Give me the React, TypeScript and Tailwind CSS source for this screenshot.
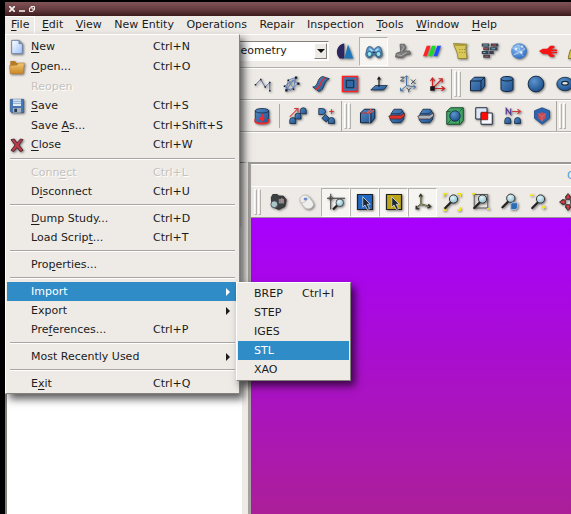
import type { ReactNode } from "react";

const SHADOW = "drop-shadow-[1px_1px_1px_rgba(0,0,0,0.5)]";

function Icon({ children, size = "w-6 h-6" }: { children: ReactNode; size?: string }) {
  return (
    <svg viewBox="0 0 24 24" className={`${size} shrink-0 ${SHADOW}`} fill="none" aria-hidden="true">
      {children}
    </svg>
  );
}

function Gradients() {
  return (
    <defs>
      <linearGradient id="blue" x1="0" y1="0" x2="1" y2="1">
        <stop offset="0" stopColor="#5289c4" />
        <stop offset="1" stopColor="#1f5390" />
      </linearGradient>
      <linearGradient id="page" x1="0" y1="0" x2="1" y2="1">
        <stop offset="0" stopColor="#ffffff" />
        <stop offset="1" stopColor="#9cc2fb" />
      </linearGradient>
      <linearGradient id="folder" x1="0" y1="0" x2="0" y2="1">
        <stop offset="0" stopColor="#f3c878" />
        <stop offset="1" stopColor="#c98722" />
      </linearGradient>
      <radialGradient id="ball" cx="0.38" cy="0.32" r="0.7">
        <stop offset="0" stopColor="#5b95cf" />
        <stop offset="1" stopColor="#1d4f8b" />
      </radialGradient>
      <radialGradient id="globe" cx="0.4" cy="0.35" r="0.7">
        <stop offset="0" stopColor="#8fbdf0" />
        <stop offset="1" stopColor="#2c6cc0" />
      </radialGradient>
      <radialGradient id="lens" cx="0.4" cy="0.35" r="0.7">
        <stop offset="0" stopColor="#e2f6fa" />
        <stop offset="1" stopColor="#8bbccb" />
      </radialGradient>
    </defs>
  );
}

const Lens = ({ x = 0, y = 0 }: { x?: number; y?: number }) => (
  <g transform={`translate(${x} ${y})`}>
    <path d="M3 20L11 12" stroke="#222" strokeWidth="3" strokeLinecap="round" />
    <circle cx="14" cy="8" r="5.5" fill="url(#lens)" stroke="#333" strokeWidth="1.3" />
  </g>
);

const Stone = ({ x, y }: { x: number; y: number }) => (
  <path d={`M${x} ${y + 8}v-4a4 4 0 0 1 8 0v4z`} fill="url(#blue)" stroke="#10253d" />
);

const Cube = () => (
  <>
    <path d="M2 8l5-5h14v12l-5 6H2z" fill="url(#blue)" stroke="#10253d" strokeWidth="1.3" />
    <path d="M2 8h14l5-5M16 8v13" stroke="#10253d" strokeWidth="1.3" />
  </>
);

const Slice = ({ color }: { color: string }) => (
  <>
    <path d="M4 9l4-6h10l3 5v8l-4 5H6l-3-4z" fill="url(#blue)" stroke="#10253d" />
    <path d="M4 9h12l4-4" stroke="#10253d" />
    <path d="M1 12l4-1h12l5-3v4l-5 4H3z" fill={color} stroke="#35201f" strokeWidth="0.8" />
  </>
);

const Cursor = ({ color }: { color: string }) => (
  <>
    <path d="M2 2h20v20H2z" fill={color} stroke="#222" strokeWidth="1.6" />
    <path d="M9 5v14l3-3 3 6 3-1-3-6h4z" fill="#1d2837" stroke="#e3e3e3" strokeWidth="1" />
  </>
);

type Tool = { label: string; art: ReactNode; on?: boolean };

const moduleTools: Tool[] = [
  {
    label: "Application",
    art: (
      <>
        <path d="M11 2v20H5C-2 16 1 3 11 2z" fill="#2b2560" />
        <path d="M16 3l7 19H11z" fill="#1f76b8" />
      </>
    ),
  },
  {
    label: "Geometry",
    on: true,
    art: (
      <>
        <path d="M3 8c3-4 6-1 9 2 3-3 6-6 9-2l2 8c0 6-8 7-9 1h-4c-1 6-9 5-9-1z" fill="#5a9ad2" stroke="#2c4a66" />
        <circle cx="6" cy="16" r="3.3" fill="#8ee5f4" stroke="#23415c" />
        <circle cx="18" cy="16" r="3.3" fill="#8ee5f4" stroke="#23415c" />
        <path d="M6 9l4 3M18 9l-4 3" stroke="#b6e2f6" strokeWidth="2" />
        <path d="M10 14h4" stroke="#234" strokeWidth="2" />
      </>
    ),
  },
  {
    label: "Study",
    art: (
      <>
        <path d="M8 3h6l2 5-4 4h9l1 4-6 1-5 4-9-1 1-5 6-2z" fill="#7c7c7c" stroke="#5c5c5c" />
        <path d="M10 4l3 3-3 5M4 17l6 1 7-4" stroke="#bdbdbd" />
      </>
    ),
  },
  {
    label: "Colors",
    art: (
      <>
        <path d="M5 5h5L5 19H0z" fill="#ff2525" />
        <path d="M12 5h5l-5 14H7z" fill="#18dd22" />
        <path d="M19 5h5l-5 14h-5z" fill="#1750ff" />
      </>
    ),
  },
  {
    label: "Notebook",
    art: (
      <>
        <path d="M2 2l18 1c-3 4-1 9 0 19H8C8 14 4 9 2 2z" fill="#d8c85a" stroke="#887820" />
        <path d="M4 4h14M10 10h1M13 10h1M16 10h1M10 14h1M13 14h1M16 14h1" stroke="#887820" strokeWidth="1.3" />
      </>
    ),
  },
  {
    label: "Wall",
    art: (
      <>
        <path d="M1 2h10v4H1zM13 2h10v4H13zM3 7h8v4H3zM12 7h10v4H12zM1 12h9v4H1zM11 12h6v4h-6zM3 17h9v4H3z" fill="#374050" />
        <path d="M3 4h6M14 9h5M3 14h3" stroke="#72b4cc" strokeWidth="1.4" />
        <path d="M4 9h5M15 4h5M5 19h5" stroke="#c94c50" strokeWidth="1.4" />
      </>
    ),
  },
  {
    label: "Network",
    art: (
      <>
        <circle cx="12" cy="12" r="10.5" fill="url(#globe)" />
        <path d="M3 8l8-4 9 5-6 5-9 3M11 4l3 10 4 5M3 8l11 6M20 9l-15 8" stroke="#cfe2f7" strokeWidth="0.7" />
        <circle cx="8" cy="9" r="1.8" fill="#e4f1fc" />
        <circle cx="15" cy="14" r="1.6" fill="#e4f1fc" />
        <circle cx="16" cy="6" r="1.3" fill="#e4f1fc" />
      </>
    ),
  },
  {
    label: "Fish",
    art: (
      <path d="M0 12l5-3h6l4-4h5l1 2-5 3h8v2h-8v1h8v2h-8l5 3-1 2h-5l-4-4H5z" fill="#f61515" />
    ),
  },
  {
    label: "Help",
    art: (
      <>
        <path d="M3 11L9 2h13v9z" fill="#3d3d35" />
        <path d="M0 22l3-11h19v11z" fill="#d6c532" stroke="#6d6420" />
      </>
    ),
  },
];

const basicTools: Tool[] = [
  {
    label: "Curve",
    art: (
      <>
        <path d="M2 13L9 6l6 10 6-6v11" stroke="#56699a" strokeWidth="1.3" />
        <path d="M1 12h2v2H1zM8 5h2v2H8zM14 15h2v2h-2zM20 9h2v2h-2zM20 20h2v2h-2z" fill="#172332" />
      </>
    ),
  },
  {
    label: "Wire",
    art: (
      <>
        <path d="M4 20L7 7l10-4-3 15zM2 15l11-8 7 4-10 10zM7 7l7 11M4 20l13-17" stroke="#5577b4" strokeWidth="1.1" />
        <path d="M3 19h3v3H3zM6 6h2v2H6zM16 2h3v3h-3zM19 10h3v3h-3zM13 18h2v2h-2zM1 14h2v2H1z" fill="#101827" />
      </>
    ),
  },
  {
    label: "Surface",
    art: (
      <>
        <path d="M1 16c8 0 5-12 13-14l9 3c-8 3-6 15-14 17z" fill="url(#blue)" stroke="#10253d" />
        <path d="M5 19c8-2 5-13 13-15" stroke="#dd3131" strokeWidth="2" />
      </>
    ),
  },
  {
    label: "Inner face",
    art: (
      <>
        <path d="M2 2h20v20H2z" fill="#3a73ad" stroke="#ff2424" strokeWidth="2" />
        <path d="M3 3l5 5M21 3l-5 5M3 21l5-5M21 21l-5-5" stroke="#d93a4b" />
        <path d="M7 7h10v10H7z" fill="#3068a3" stroke="#12243d" strokeWidth="1.3" />
      </>
    ),
  },
  {
    label: "Plane",
    art: (
      <>
        <path d="M7 14h16l-5 6H1z" fill="url(#blue)" stroke="#10253d" />
        <path d="M12 16V4M10 6l2-3 2 3" stroke="#171717" strokeWidth="1.5" />
      </>
    ),
  },
  {
    label: "Local axes",
    art: (
      <>
        <path d="M10 1v13l12 2M10 14l-8 7M8 3l2-2 2 2M19 13l3 3-3 3M2 17v4h4" stroke="#44719f" strokeWidth="1.3" />
        <path d="M2 3h5L2 8h5M16 6l6 6M22 6l-6 6M10 17l3 3 3-3M13 20v3" stroke="#404957" strokeWidth="1.3" />
      </>
    ),
  },
  {
    label: "Origin",
    art: (
      <>
        <path d="M6 18V4M6 18h16M6 18L18 6M3 8l3-4 3 4M18 15l4 3-4 3M14 5h5v5" stroke="#cd2525" strokeWidth="1.6" />
        <path d="M3 15h6v6H3z" fill="#151515" />
      </>
    ),
  },
];

const primitives: Tool[] = [
  { label: "Box", art: <Cube /> },
  {
    label: "Cylinder",
    art: (
      <>
        <path d="M4 5c0-4 16-4 16 0v14c0 4-16 4-16 0z" fill="url(#blue)" stroke="#10253d" strokeWidth="1.3" />
        <path d="M4 5c0 4 16 4 16 0" stroke="#10253d" strokeWidth="1.3" />
      </>
    ),
  },
  { label: "Sphere", art: <circle cx="12" cy="12" r="10.5" fill="url(#ball)" stroke="#10253d" strokeWidth="1.2" /> },
  {
    label: "Torus",
    art: (
      <>
        <ellipse cx="12" cy="12" rx="11" ry="9" fill="url(#ball)" stroke="#10253d" />
        <ellipse cx="12" cy="11" rx="4.500" ry="2.500" fill="#e8e5df" stroke="#10253d" strokeWidth="1.6" />
      </>
    ),
  },
];

const revolve: Tool[] = [
  {
    label: "Extrude cut",
    art: (
      <>
        <path d="M3 5c0-4 18-4 18 0v14c0 4-18 4-18 0z" fill="url(#blue)" stroke="#10253d" />
        <path d="M3 5c0 4 18 4 18 0" stroke="#10253d" />
        <path d="M12 9v8M9 14l3 4 3-4" stroke="#ff2424" strokeWidth="2.2" />
        <path d="M3 16v3c0 4 18 4 18 0v-3" stroke="#f02b2b" strokeWidth="2.4" />
      </>
    ),
  },
];

const transforms: Tool[] = [
  {
    label: "Translate",
    art: (
      <>
        <Stone x={1} y={14} />
        <Stone x={8} y={8} />
        <Stone x={15} y={1} />
        <path d="M1 13L11 3M7 2h5v5" stroke="#dd3030" strokeWidth="1.4" />
      </>
    ),
  },
  {
    label: "Mirror",
    art: (
      <>
        <path d="M1 2h5a4 4 0 0 1 0 8H1zM5 15l5-5 5 5-4 5z" fill="url(#blue)" stroke="#10253d" />
        <Stone x={14} y={14} />
        <path d="M18 3v6M15 6h6" stroke="#dd3030" strokeWidth="1.6" />
      </>
    ),
  },
];

const operations: Tool[] = [
  {
    label: "Fuse",
    art: (
      <>
        <Cube />
        <path d="M3 8h12l5-4M11 8l5-5M14 9v12" stroke="#ef5b55" strokeWidth="1.5" />
      </>
    ),
  },
  { label: "Section", art: <Slice color="#df3030" /> },
  { label: "Partition", art: <Slice color="#aeb4bb" /> },
  {
    label: "Bounding",
    art: (
      <>
        <path d="M1 6l5-5h17v17l-4 5H1z" fill="#43a467" stroke="#174928" strokeWidth="1.3" />
        <circle cx="12" cy="12" r="7" fill="url(#ball)" stroke="#10253d" />
        <path d="M1 6h5M18 22v-5M18 6l4-4M2 22l5-5" stroke="#174928" />
      </>
    ),
  },
  {
    label: "Common",
    art: (
      <>
        <path d="M1 1h15v15H1z" fill="#dbe7f8" stroke="#1d2838" strokeWidth="1.3" />
        <path d="M8 8h15v15H8z" fill="#f5f8fd" stroke="#1d2838" strokeWidth="1.3" />
        <path d="M8 7h9v10H8z" fill="#ff0808" stroke="#751515" />
      </>
    ),
  },
  {
    label: "Rename",
    art: (
      <>
        <path d="M3 10V2l6 8V2" stroke="#50358d" strokeWidth="1.6" />
        <path d="M11 6h11M18 3l4 3-4 3" stroke="#d03b3b" strokeWidth="1.4" />
        <Stone x={1} y={14} />
        <Stone x={14} y={14} />
      </>
    ),
  },
  {
    label: "Shield",
    art: (
      <>
        <path d="M12 1l10 4v10l-10 8-10-8V5z" fill="#2b66b1" stroke="#1d4680" />
        <path d="M12 7l5 2v6l-5 4-5-4V9z" fill="#c54b57" />
        <path d="M12 13l5-4M12 13L7 9M12 13v6" stroke="#d9737b" />
      </>
    ),
  },
];

const viewTools: Tool[] = [
  {
    label: "Dump view",
    art: (
      <>
        <path d="M3 6l2-4h6l2 2h6l4 5-2 9-8 4-9-4z" fill="#3b4040" stroke="#222" />
        <path d="M13 8h7v6h-7z" fill="#838b8c" />
        <path d="M17 7v5" stroke="#e07474" strokeWidth="2" />
        <circle cx="7" cy="15" r="4.500" fill="#aac7c5" stroke="#445" />
      </>
    ),
  },
  {
    label: "Interaction style",
    art: (
      <>
        <path d="M4 5c4-4 9-2 12 2s7 8 3 12-10 2-12-2-7-8-3-12z" fill="#eeeeec" stroke="#b7b7b5" />
        <ellipse cx="10" cy="8" rx="2.500" ry="2" fill="#6d88cd" />
        <path d="M5 13c4 0 7-3 9-7" stroke="#bbb" />
      </>
    ),
  },
  {
    label: "Zooming style",
    on: true,
    art: (
      <>
        <path d="M5 1v21M0 7h24" stroke="#333" strokeWidth="1.3" />
        <circle cx="5" cy="7" r="2.500" stroke="#555" />
        <path d="M8 22l6-6" stroke="#222" strokeWidth="3" />
        <circle cx="17" cy="13" r="5" fill="url(#lens)" stroke="#333" />
      </>
    ),
  },
  { label: "Preselection", on: true, art: <Cursor color="#2069c5" /> },
  { label: "Selection", on: true, art: <Cursor color="#bba719" /> },
  {
    label: "Trihedron",
    on: true,
    art: (
      <>
        <path d="M9 3v12l-6 5M9 15l12 3M7 5l2-3 2 3M19 15l3 3-4 2M3 17v4h4" stroke="#33342a" strokeWidth="2" />
        <path d="M9 4v11l11 3M9 15l-5 4" stroke="#b4b27b" />
      </>
    ),
  },
  {
    label: "Fit all",
    art: (
      <>
        <path d="M1 5V1h4M19 1h4v4M23 19v4h-4M5 23H1v-4" stroke="#f3e915" strokeWidth="2" />
        <Lens />
      </>
    ),
  },
  {
    label: "Fit area",
    art: (
      <>
        <path d="M3 2h18v18H3z" stroke="#555" strokeWidth="1.3" />
        <Lens />
        <path d="M0 1h4M20 21h4" stroke="#eee020" strokeWidth="2" />
      </>
    ),
  },
  {
    label: "Fit selection",
    art: (
      <>
        <Lens x={-1} y={-1} />
        <path d="M13 15l2-2h7v6l-2 3h-7z" fill="#2b6db4" stroke="#b9d1e8" />
      </>
    ),
  },
  {
    label: "Zoom",
    art: (
      <>
        <Lens />
        <path d="M0 3h5M18 16v6M15 19h6" stroke="#f3e915" strokeWidth="1.7" />
      </>
    ),
  },
  {
    label: "Pan",
    art: (
      <>
        <path d="M12 0l4 5-1 4H9L8 5zM12 24l4-5-1-4H9l-1 4zM0 12l5-4 4 1v6l-4 1zM24 12l-5-4-4 1v6l4 1z" fill="#303030" />
        <path d="M12 2l2 5h-4zM12 22l2-5h-4zM2 12l5-2v4zM22 12l-5-2v4z" fill="#e33b45" stroke="#e33b45" />
      </>
    ),
  },
];

function ToolButtons({ tools }: { tools: Tool[] }) {
  return (
    <>
      {tools.map((t) => (
        <button
          key={t.label}
          type="button"
          aria-label={t.label}
          aria-pressed={t.on ? true : undefined}
          className={`flex h-[29px] w-[29px] shrink-0 items-center justify-center border ${
            t.on ? "border-[#b5b2ad] border-r-white border-b-white bg-[#f6f5f2]" : "border-transparent"
          }`}
        >
          <Icon size="h-[18px] w-[18px]">{t.art}</Icon>
        </button>
      ))}
    </>
  );
}

function Grip({ edge = false }: { edge?: boolean }) {
  return (
    <span
      className={`flex w-3 shrink-0 items-center justify-center gap-px self-stretch border-l ${
        edge ? "border-[#aaa7a2]" : "border-transparent"
      }`}
    >
      <span className="h-[26px] w-[3px] border border-[#b5b2ad] border-t-white border-l-white" />
      <span className="h-[26px] w-[3px] border border-[#b5b2ad] border-t-white border-l-white" />
    </span>
  );
}

/** Text in which the letter after an ampersand is the underlined mnemonic. */
function Mnemonic({ text }: { text: string }) {
  const i = text.indexOf("&");
  if (i < 0) return <>{text}</>;
  return (
    <>
      {text.slice(0, i)}
      <span className="underline underline-offset-2">{text[i + 1]}</span>
      {text.slice(i + 2)}
    </>
  );
}

const menus = ["&File", "&Edit", "&View", "New Entity", "Operations", "Repair", "Inspection", "&Tools", "&Window", "&Help"];

type Item = {
  text: string;
  keys?: string;
  icon?: ReactNode;
  disabled?: boolean;
  sub?: boolean;
  active?: boolean;
};

const fileMenu: Item[][] = [
  [
    {
      text: "&New",
      keys: "Ctrl+N",
      icon: <path d="M4 2h11l5 5v15H4zM15 2v5h5" fill="url(#page)" stroke="#7284a3" strokeWidth="1.5" />,
    },
    {
      text: "&Open...",
      keys: "Ctrl+O",
      icon: (
        <>
          <path d="M2 3h7l2 3h10v16H2z" fill="#b67a24" />
          <path d="M1 10l11-1 2-3h9l-2 16H2z" fill="url(#folder)" stroke="#b9823a" />
        </>
      ),
    },
    { text: "Reopen", disabled: true },
    {
      text: "&Save",
      keys: "Ctrl+S",
      icon: (
        <>
          <path d="M2 2h20v20H4l-2-2z" fill="#4678b8" stroke="#31588a" />
          <path d="M6 2h12v10H6z" fill="#e5ebf2" />
          <path d="M6 5h12M6 8h12" stroke="#78a0cc" strokeWidth="1.3" />
          <path d="M6 15h12v7H6z" fill="#a8b5bd" />
          <path d="M8 16h4v5H8z" fill="#26384c" />
        </>
      ),
    },
    { text: "Save &As...", keys: "Ctrl+Shift+S" },
    {
      text: "&Close",
      keys: "Ctrl+W",
      icon: (
        <path
          d="M3 4l5-1 4 6 5-6 4 1-6 8 6 8-4 2-5-6-5 6-4-2 6-8z"
          fill="#b83b48"
          stroke="#4d2930"
          strokeWidth="1.4"
        />
      ),
    },
  ],
  [
    { text: "Conn&ect", keys: "Ctrl+L", disabled: true },
    { text: "D&isconnect", keys: "Ctrl+U" },
  ],
  [
    { text: "&Dump Study...", keys: "Ctrl+D" },
    { text: "Load Scrip&t...", keys: "Ctrl+T" },
  ],
  [{ text: "Pro&perties..." }],
  [
    { text: "Import", sub: true, active: true },
    { text: "Export", sub: true },
    { text: "Pre&ferences...", keys: "Ctrl+P" },
  ],
  [{ text: "Most Recently Used", sub: true }],
  [{ text: "E&xit", keys: "Ctrl+Q" }],
];

const importMenu: Item[] = [
  { text: "BREP", keys: "Ctrl+I" },
  { text: "STEP" },
  { text: "IGES" },
  { text: "STL", active: true },
  { text: "XAO" },
];

const MENU_BOX =
  "border border-t-white border-l-white border-r-[#85827e] border-b-[#85827e] bg-[#eeebe7] shadow-[4px_5px_8px_rgba(0,0,0,0.65)]";

function tone(item: Item) {
  if (item.active) return "bg-[#308cc6] text-white";
  if (item.disabled) return "text-[#c5c2bd] [text-shadow:1px_1px_0_white]";
  return "text-[#1b1b1b]";
}

function FileMenu() {
  return (
    <div role="menu" aria-label="File" className={`absolute top-full left-0 z-10 w-[235px] pt-0.5 ${MENU_BOX}`}>
      {fileMenu.map((group, g) => (
        <div key={g}>
          {g > 0 && (
            <div className="flex h-2 items-center px-1">
              <div className="h-0.5 w-full border-t border-b border-t-[#a9a6a2] border-b-white" />
            </div>
          )}
          {group.map((item) => (
            <div key={item.text} className="relative px-px">
              <button
                type="button"
                role="menuitem"
                disabled={item.disabled}
                className={`flex w-full items-center pr-2 text-left ${item.icon ? "h-5" : "h-[19px]"} ${tone(item)}`}
              >
                <span className="flex w-6 justify-start pl-0.5">
                  {item.icon && <Icon size="h-4 w-4">{item.icon}</Icon>}
                </span>
                <span className="w-[122px] whitespace-nowrap">
                  <Mnemonic text={item.text} />
                </span>
                <span className="flex-1">{item.keys}</span>
                {item.sub && (
                  <svg viewBox="0 0 4 8" className="h-2 w-1" aria-hidden="true">
                    <path d="M0 0l4 4-4 4z" fill="currentColor" />
                  </svg>
                )}
              </button>
              {item.sub && item.active && <ImportMenu />}
            </div>
          ))}
        </div>
      ))}
    </div>
  );
}

function ImportMenu() {
  return (
    <div role="menu" aria-label="Import" className={`absolute top-0 left-[230px] w-[115px] p-px ${MENU_BOX}`}>
      {importMenu.map((item) => (
        <button
          key={item.text}
          type="button"
          role="menuitem"
          className={`flex h-[19px] w-full items-center pl-4 text-left ${tone(item)}`}
        >
          <span className="w-12">{item.text}</span>
          <span>{item.keys}</span>
        </button>
      ))}
    </div>
  );
}

const ROW = "flex shrink-0 items-center overflow-hidden border-t border-b border-t-white border-b-[#b3b0ab]";

export default function App() {
  return (
    <div className="flex h-screen flex-col overflow-hidden bg-black pt-0.5 pl-[5px] font-['DejaVu_Sans',sans-serif] text-[11px] leading-4 text-[#1b1b1b]">
      <header className="flex h-3.5 shrink-0 items-center gap-1 bg-linear-to-b/srgb from-[#805355] via-[#683d40] via-50% to-[#3c1b1d] pl-1 text-[#f2eceb]">
        <button type="button" aria-label="Close window">
          <svg viewBox="0 0 6 6" className="h-1.5 w-1.5" stroke="currentColor" strokeWidth="1.8">
            <path d="M0 0l6 6M6 0L0 6" />
          </svg>
        </button>
        <button type="button" aria-label="Minimize window">
          <svg viewBox="0 0 6 6" className="h-1.5 w-1.5" stroke="currentColor" strokeWidth="1.6">
            <path d="M0 5h6" />
          </svg>
        </button>
        <button type="button" aria-label="Restore window">
          <svg viewBox="0 0 6 6" className="h-1.5 w-1.5" fill="none" stroke="currentColor">
            <path d="M2 2V.5h3.500v3.500H4M.5 2h3.500v3.500H.5z" />
          </svg>
        </button>
        <svg className="h-0 w-0" aria-hidden="true">
          <Gradients />
        </svg>
      </header>

      <nav className="relative shrink-0 bg-[#eeebe7]">
        <div className="flex h-[18px] w-[498px] justify-between">
          {menus.map((m, i) => (
            <button
              key={m}
              type="button"
              className={`px-1.5 whitespace-nowrap ${i === 0 ? "shadow-[inset_-1px_1px_0_white]" : ""}`}
            >
              <Mnemonic text={m} />
            </button>
          ))}
        </div>
        <FileMenu />
      </nav>

      <div className="flex shrink-0 flex-col bg-[#eeebe7]">
        <div className={`${ROW} h-[34px] pl-[220px]`}>
          <label className="relative mr-px block w-[104px] shrink-0">
            <span className="sr-only">Module</span>
            <select
              defaultValue="Geometry"
              className="block h-5 w-full appearance-none border border-[#85827e] border-r-white border-b-white bg-white pl-1.5"
            >
              <option>Geometry</option>
              <option>Mesh</option>
            </select>
            <span className="pointer-events-none absolute top-0.5 right-0.5 flex h-4 w-[13px] items-center justify-center border border-white border-r-[#85827e] border-b-[#85827e] bg-[#eeebe7]">
              <svg viewBox="0 0 8 4" className="h-1 w-2" aria-hidden="true">
                <path d="M0 0h8L4 4z" fill="#111" />
              </svg>
            </span>
          </label>
          <ToolButtons tools={moduleTools} />
        </div>
        <div className={`${ROW} h-8 pl-[243px]`}>
          <ToolButtons tools={basicTools} />
          <Grip edge />
          <ToolButtons tools={primitives} />
        </div>
        <div className={`${ROW} h-8 pl-[242px]`}>
          <ToolButtons tools={revolve} />
          <span className="mx-[3px] h-6 w-px shrink-0 bg-[#aaa7a2]" />
          <ToolButtons tools={transforms} />
          <Grip edge />
          <ToolButtons tools={operations} />
          <Grip edge />
        </div>
        <div className="h-[30px] border-t border-t-white" />
      </div>

      <main className="flex min-h-0 flex-1 bg-[#eeebe7]">
        <section
          aria-label="Object browser"
          className="flex w-[243px] shrink-0 flex-col border-t border-r-[6px] border-l-2 border-t-[#85827e] border-r-[#eeebe7] border-l-[#85827e] bg-white"
        >
          <div className="h-16 bg-[#eeebe7]" />
        </section>
        <section
          aria-label="Viewer"
          className="flex min-w-0 flex-1 flex-col border-t-2 border-l-[3px] border-t-[#9b9894] border-l-[#a5a29f]"
        >
          <h2 className="flex h-[23px] shrink-0 items-center justify-end overflow-hidden border-t border-b border-white font-normal text-[#4b9fda]">
            <span className="w-1 overflow-visible whitespace-nowrap">OCC scene:1</span>
          </h2>
          <div className="flex h-[31px] shrink-0 items-center overflow-hidden border-b border-[#9b9894]">
            <Grip />
            <ToolButtons tools={viewTools} />
          </div>
          <div className="flex-1 bg-linear-to-b/srgb from-[#a800ff] to-[#ab1f98]" />
        </section>
      </main>
    </div>
  );
}
